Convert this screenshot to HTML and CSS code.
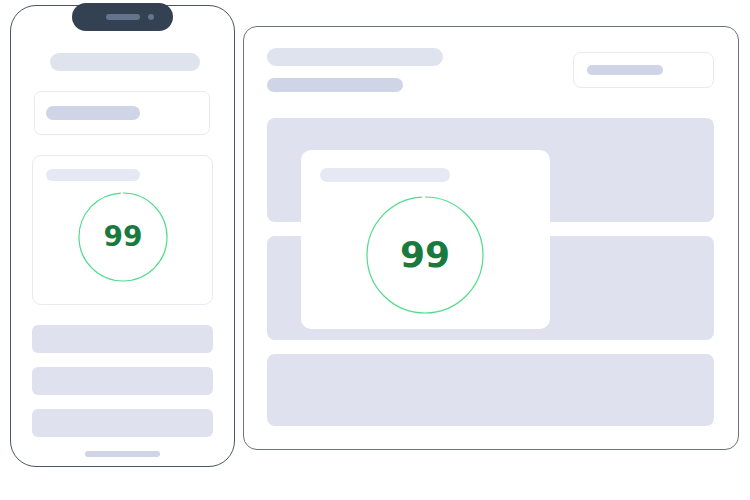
FILE: index.html
```html
<!DOCTYPE html>
<html>
<head>
<meta charset="utf-8">
<link rel="stylesheet" href="styles.css">
</head>
<body>
<div class="stage">
  <div class="phone">
    <div class="notch"><span class="speaker"></span><span class="camera"></span></div>
    <div class="p-title"></div>
    <div class="p-box"><span class="p-box-pill"></span></div>
    <div class="p-score">
      <div class="p-score-pill"></div>
      <div class="gauge gauge-sm">
        <svg width="90" height="90" viewBox="0 0 90 90">
          <circle cx="45" cy="45" r="44" fill="none" stroke="#4fdc8c" stroke-width="1.2" stroke-dasharray="273.7 2.8" transform="rotate(-90 45 45)"/>
        </svg>
        <span class="score score-sm">99</span>
      </div>
    </div>
    <div class="p-row"></div>
    <div class="p-row"></div>
    <div class="p-row"></div>
    <div class="home"></div>
  </div>
  <div class="browser">
    <div class="b-head">
      <div class="b-titles">
        <div class="b-title"></div>
        <div class="b-sub"></div>
      </div>
      <div class="b-btn"><span class="b-btn-pill"></span></div>
    </div>
    <div class="b-block b-block-1"></div>
    <div class="b-block b-block-2"></div>
    <div class="b-block b-block-3"></div>
    <div class="b-card">
      <div class="b-card-pill"></div>
      <div class="gauge gauge-lg">
        <svg width="118" height="118" viewBox="0 0 118 118">
          <circle cx="59" cy="59" r="58" fill="none" stroke="#4fdc8c" stroke-width="1.2" stroke-dasharray="360.8 3.6" transform="rotate(-90 59 59)"/>
        </svg>
        <span class="score score-lg">99</span>
      </div>
    </div>
  </div>
</div>
</body>
</html>
```
FILE: styles.css
```css
* { box-sizing: border-box; }
html, body { margin: 0; padding: 0; background: #ffffff; }
body { width: 750px; height: 500px; overflow: hidden; font-family: "DejaVu Sans", sans-serif; }

.stage {
  display: flex;
  align-items: flex-start;
  gap: 8px;
  padding-left: 10px;
}

/* Phone */
.phone {
  position: relative;
  margin-top: 5px;
  width: 225px;
  height: 462px;
  border: 1px solid #4b5563;
  border-radius: 26px;
  padding: 47px 0 0 21px;
  display: flex;
  flex-direction: column;
  align-items: flex-start;
}
.notch {
  position: absolute;
  top: -3px;
  left: 61px;
  width: 101px;
  height: 28px;
  border-radius: 14px;
  background: #334152;
  display: flex;
  align-items: center;
  padding-left: 34px;
  gap: 8px;
}
.speaker { width: 34px; height: 6px; border-radius: 3px; background: #64748b; }
.camera { width: 6px; height: 6px; border-radius: 50%; background: #64748b; }

.p-title {
  width: 150px; height: 18px; border-radius: 9px;
  background: #dfe3ee;
  margin-left: 18px;
}
.p-box {
  margin-top: 20px;
  margin-left: 2px;
  width: 176px; height: 44px;
  border: 1px solid #e8eaf3;
  border-radius: 7px;
  display: flex; align-items: center;
  padding-left: 11px;
}
.p-box-pill { width: 94px; height: 14px; border-radius: 7px; background: #cfd4e6; }

.p-score {
  margin-top: 20px;
  width: 181px; height: 150px;
  border: 1px solid #e8eaf3;
  border-radius: 9px;
  padding: 13px 0 0 13px;
  display: flex; flex-direction: column; align-items: flex-start;
}
.p-score-pill { width: 94px; height: 12px; border-radius: 6px; background: #e6e9f3; }

.gauge { display: grid; place-items: center; }
.gauge > * { grid-area: 1 / 1; }
.gauge svg { display: block; }
.gauge-sm { margin-top: 11px; margin-left: 32px; }
.score { font-weight: bold; color: #1a7a3e; line-height: 1; }
.score-sm { font-size: 28px; }
.score-lg { font-size: 36px; }

.p-row {
  margin-top: 14px;
  width: 181px; height: 28px;
  border-radius: 6px;
  background: #dfe2ee;
}
.p-score + .p-row { margin-top: 20px; }
.home {
  margin-top: 14px;
  margin-left: 53px;
  width: 75px; height: 6px; border-radius: 3px;
  background: #cfd4e6;
}

/* Browser */
.browser {
  position: relative;
  margin-top: 26px;
  width: 496px;
  height: 424px;
  border: 1px solid #6b7280;
  border-radius: 14px;
  padding: 21px 24px 0 23px;
  display: flex; flex-direction: column;
}
.b-head { display: flex; justify-content: space-between; align-items: flex-start; }
.b-titles { display: flex; flex-direction: column; gap: 12px; }
.b-title { width: 176px; height: 18px; border-radius: 9px; background: #dfe3ee; }
.b-sub { width: 136px; height: 14px; border-radius: 7px; background: #cfd4e6; }
.b-btn {
  margin-top: 4px;
  width: 141px; height: 36px;
  border: 1px solid #e8eaf3;
  border-radius: 8px;
  display: flex; align-items: center;
  padding-left: 13px;
}
.b-btn-pill { width: 76px; height: 10px; border-radius: 5px; background: #cfd4e6; }

.b-block { border-radius: 8px; background: #dfe1ee; margin-top: 14px; }
.b-block-1 { margin-top: 26px; height: 104px; }
.b-block-2 { height: 104px; }
.b-block-3 { height: 72px; }

.b-card {
  position: absolute;
  left: 57px;
  top: 123px;
  width: 249px;
  height: 179px;
  background: #ffffff;
  border-radius: 10px;
  padding: 18px 0 0 19px;
  display: flex; flex-direction: column; align-items: flex-start;
}
.b-card-pill { width: 130px; height: 14px; border-radius: 7px; background: #e6e9f3; }
.gauge-lg { margin-top: 14px; margin-left: 46px; }
```
